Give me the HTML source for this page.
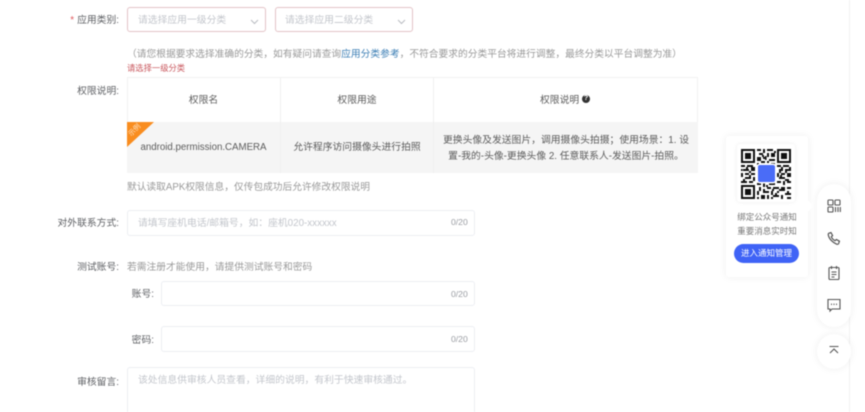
<!DOCTYPE html>
<html lang="zh"><head><meta charset="utf-8"><style>
html,body{margin:0;padding:0;background:#fff}
body{width:865px;height:412px;overflow:hidden;position:relative}
#p{position:absolute;left:0;top:0;width:865px;height:412px;overflow:hidden;filter:blur(.5px);font-family:"Liberation Sans","Noto Sans CJK SC",sans-serif;font-size:9.8px;color:#666}
#p div,#p span.a{position:absolute;white-space:nowrap;box-sizing:border-box}
.l{right:746px;text-align:right;line-height:14px;color:#606266}
.s{top:7px;height:25px;border:1px solid #e3c3c7;border-radius:3px;width:139px}
.ph{color:#c3c6cc;line-height:14px}
.i{border:1px solid #eceef2;border-radius:3px;background:#fff}
.c{color:#9a9da3;font-size:8.6px;line-height:12px}
.m{line-height:14px;color:#999}
.t{color:#5c5c5c;line-height:14px;text-align:center}
.w{background:#fff;box-shadow:0 0 8px rgba(0,0,0,.07)}
</style></head><body><div id="p">
<div style="left:849px;top:0;width:1px;height:412px;background:#f2f2f2"></div>

<div class="l" style="top:14px"><span style="color:#e0585c;margin-right:3px">*</span>应用类别:</div>
<div class="s" style="left:127px"></div>
<div class="ph" style="left:138px;top:14px">请选择应用一级分类</div>
<svg style="position:absolute;left:250px;top:19px" width="10" height="6"><path d="M1 1l3.500 3.500L8 1" fill="none" stroke="#b9bcc2"/></svg>
<div class="s" style="left:275px;width:138px"></div>
<div class="ph" style="left:285px;top:14px">请选择应用二级分类</div>
<svg style="position:absolute;left:397px;top:19px" width="10" height="6"><path d="M1 1l3.500 3.500L8 1" fill="none" stroke="#b9bcc2"/></svg>

<div class="m" style="left:127px;top:48px;font-size:9.74px">（请您根据要求选择准确的分类，如有疑问请查询<span style="color:#3d7fb5">应用分类参考</span>，不符合要求的分类平台将进行调整，最终分类以平台调整为准）</div>
<div style="left:127px;top:62px;font-size:8.3px;line-height:12px;color:#c9595f">请选择一级分类</div>

<div class="l" style="top:85px">权限说明:</div>
<div style="left:127px;top:77px;width:571px;height:96px;border:1px solid #f2f2f2"></div>
<div style="left:127px;top:122px;width:571px;height:51px;background:#f5f5f5"></div>
<div style="left:280px;top:77px;width:1px;height:96px;background:#f0f0f0"></div>
<div style="left:433px;top:77px;width:1px;height:96px;background:#f0f0f0"></div>
<div class="t" style="left:127px;width:153px;top:94px">权限名</div>
<div class="t" style="left:281px;width:152px;top:94px">权限用途</div>
<div class="t" style="left:540px;top:94px">权限说明</div>
<div style="left:582px;top:95px;width:8px;height:8px;border-radius:50%;background:#333;color:#fff;font-size:7px;line-height:8px;font-weight:bold;text-align:center">?</div>
<svg style="position:absolute;left:127px;top:122px" width="28" height="26"><path d="M0 0H27L0 25Z" fill="#f98d1f"/></svg>
<div style="left:128px;top:126px;font-size:7px;line-height:9px;color:#fde3c5;transform:rotate(-45deg)">示例</div>
<div class="t" style="left:127px;width:153px;top:141px;font-size:9.7px">android.permission.CAMERA</div>
<div class="t" style="left:281px;width:152px;top:141px">允许程序访问摄像头进行拍照</div>
<div class="t" style="left:434px;width:264px;top:133px;line-height:15.5px">更换头像及发送图片，调用摄像头拍摄；使用场景：1. 设<br>置-我的-头像-更换头像 2. 任意联系人-发送图片-拍照。</div>
<div class="m" style="left:127px;top:181px;font-size:9.72px">默认读取APK权限信息，仅传包成功后允许修改权限说明</div>

<div class="l" style="top:217px">对外联系方式:</div>
<div class="i" style="left:127px;top:210px;width:348px;height:26px"></div>
<div class="ph" style="left:138px;top:217px">请填写座机电话/邮箱号，如：座机020-xxxxxx</div>
<div class="c" style="left:451px;top:216px">0/20</div>

<div class="l" style="top:261px">测试账号:</div>
<div class="m" style="left:127px;top:261px;font-size:9.75px">若需注册才能使用，请提供测试账号和密码</div>

<div class="l" style="top:288px;right:711px">账号:</div>
<div class="i" style="left:161px;top:281px;width:314px;height:25px"></div>
<div class="c" style="left:451px;top:288px">0/20</div>

<div class="l" style="top:334px;right:711px">密码:</div>
<div class="i" style="left:161px;top:326px;width:314px;height:26px"></div>
<div class="c" style="left:451px;top:333px">0/20</div>

<div class="l" style="top:376px">审核留言:</div>
<div class="i" style="left:127px;top:367px;width:348px;height:60px"></div>
<div class="ph" style="left:138px;top:374px">该处信息供审核人员查看，详细的说明，有利于快速审核通过。</div>

<div class="w" style="left:726px;top:136px;width:82px;height:141px;border-radius:3px"></div>
<div style="left:804px;top:202px;width:8px;height:8px;background:#fff;transform:rotate(45deg)"></div>
<div style="left:737px;top:144px;width:58px;height:58px;background:#fff;border-radius:3px;box-shadow:0 0 4px rgba(0,0,0,.08)"></div>
<svg style="position:absolute;left:741px;top:149px" width="50" height="50" viewBox="0 0 25 25">
<path fill="#111" fill-rule="evenodd" d="M0 0h7v7H0zM1 1v5h5V1zM2 2h3v3H2zM18 0h7v7h-7zM19 1v5h5V1zM20 2h3v3h-3zM0 18h7v7H0zM1 19v5h5v-5zM2 20h3v3H2z
M8 0h2v1H8zM11 0h1v2h-1zM13 0h3v1h-3zM9 2h2v1H9zM13 2h1v2h-1zM15 2h2v2h-2zM8 4h2v2H8zM11 4h1v1h-1zM14 5h3v1h-3zM10 6h2v1h-2zM13 6h1v1h-1zM8 7h1v1H8zM15 7h2v1h-2zM10.500 3h1v1h-1zM16.500 1h1v1h-1zM12 3.500h.8v2h-.8z
M0 8h2v1H0zM3 8h3v1H3zM18 8h2v1h-2zM21 8h3v1h-3zM1 10h3v1H1zM5 9h2v2H5zM19 10h2v1h-2zM22 10h3v1h-3zM0 12h1v2H0zM2 12h2v1H2zM5 12h2v1H5zM18 12h1v2h-1zM20 12h2v1h-2zM23 12h2v2h-2zM2 14h3v1H2zM6 14h1v2H6zM19 14h3v1h-3zM0 16h3v1H0zM4 16h2v1H4zM18 16h2v1h-2zM21 16h1v2h-1zM23 16h2v1h-2zM0 10h.8v1h-.8zM2.500 9h1v1h-1zM4 11h1v1H4zM1 15h1v1H1zM4 13h1v1H4zM20 9h1v1h-1zM24 9h1v1h-1zM19 11h1v1h-1zM22 11h1v1h-1zM22 15h2v1h-2zM19.500 13h1v1h-1z
M8 17h2v1H8zM11 17h1v2h-1zM14 17h3v1h-3zM9 19h1v2H9zM13 19h2v1h-2zM16 19h3v1h-3zM20 19h2v2h-2zM23 19h2v1h-2zM8 21h1v2H8zM11 21h3v1h-3zM15 21h1v2h-1zM18 21h1v1h-1zM22 22h3v1h-3zM10 23h2v2h-2zM13 23h1v2h-1zM16 23h3v1h-3zM20 23h1v2h-1zM8 24h1v1H8zM15 24h1v1h-1zM23 24h2v1h-2zM11 20h1v1h-1zM15.500 20h1v1h-1zM17 22h1v1h-1zM19 20h1v1h-1zM23 21h1v1h-1zM12.500 18h1v1h-1z"/></svg>
<div style="left:758px;top:165px;width:17px;height:17px;background:#4a6cf7;border-radius:2px;box-shadow:0 0 0 1.500px #fff"></div>
<div style="left:726px;width:82px;top:210px;font-size:8.5px;line-height:14px;text-align:center;color:#777;white-space:normal">绑定公众号通知<br>重要消息实时知</div>
<div style="left:734px;top:244px;width:65px;height:19px;border-radius:10px;background:#3f63f6;color:#fff;font-size:8.5px;line-height:19px;text-align:center">进入通知管理</div>

<div class="w" style="left:817px;top:184px;width:34px;height:143px;border-radius:17px"></div>
<svg style="position:absolute;left:826px;top:199px" width="16" height="14" fill="none" stroke="#555" stroke-width="1.100"><rect x="2" y="1" width="5" height="5" rx=".8"/><rect x="9" y="1" width="5" height="5" rx=".8"/><rect x="2" y="8" width="5" height="5" rx=".8"/><path d="M9.500 8v5M12 8v5M14.300 8v5"/></svg>
<svg style="position:absolute;left:826px;top:231px" width="16" height="16" fill="none" stroke="#555" stroke-width="1.200"><path d="M3 2.200l2-.6 1.600 3-1.300 1.200c.7 1.700 2 3 3.800 3.900l1.300-1.200 3 1.700-.7 2.200c-.3.8-1 1-1.800.9C6.700 11.500 3 8 2.300 3.900c-.1-.7.1-1.400.7-1.700z"/></svg>
<svg style="position:absolute;left:827px;top:265px" width="14" height="16" fill="none" stroke="#555" stroke-width="1.100"><rect x="2" y="2.500" width="10" height="12" rx="1"/><path d="M4.500 1v3M9.500 1v3M4.500 7h5M4.500 9.500h5M4.500 12h3"/></svg>
<svg style="position:absolute;left:826px;top:298px" width="16" height="15" fill="none" stroke="#555" stroke-width="1.100"><path d="M2 1.500h12v9.500H6l-2 2v-2H2z"/><path d="M5 6.300h1M7.500 6.300h1M10 6.300h1" stroke-width="1.300"/></svg>

<div class="w" style="left:817px;top:334px;width:34px;height:35px;border-radius:50%"></div>
<svg style="position:absolute;left:828px;top:345px" width="12" height="12" fill="none" stroke="#555" stroke-width="1.100"><path d="M1.500 1.500h9M2 8l4-4 4 4"/></svg>
</div></body></html>
